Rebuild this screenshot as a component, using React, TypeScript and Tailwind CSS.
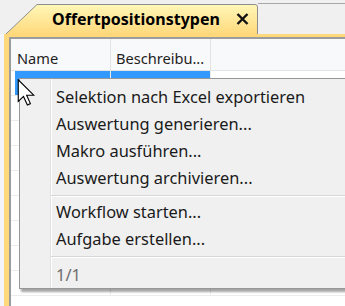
import React from 'react';

const menuItems = [
  'Selektion nach Excel exportieren',
  'Auswertung generieren...',
  'Makro ausführen...',
  'Auswertung archivieren...',
];

const menuItems2 = ['Workflow starten...', 'Aufgabe erstellen...'];

const Separator: React.FC = () => (
  <div className="h-[7px] flex flex-col justify-center pl-[31px]">
    <div className="h-px bg-[#d7d7d7]" />
    <div className="h-px bg-white" />
  </div>
);

const Cursor: React.FC = () => (
  <svg className="absolute left-[17px] top-[79px]" width="19" height="27" viewBox="0 0 12 18">
    <path
      d="M0.5 0.5 L0.5 15 L4 11.6 L6.6 17.3 L8.6 16.4 L6.1 10.8 L10.8 10.8 Z"
      fill="#fff"
      stroke="#000"
      strokeWidth="0.75"
      strokeLinejoin="miter"
    />
  </svg>
);

const App: React.FC = () => {
  const rows = Array.from({ length: 9 }, (_, i) => i);

  return (
    <div className="relative w-[345px] h-[306px] overflow-hidden bg-[#f0f0f0] font-['Noto_Sans',sans-serif] text-[#1a1a1a]">
      {/* tab strip */}
      <div className="flex h-[34px] pl-[6px]">
        <div className="relative mt-[4px] w-[252px] h-[30px] flex items-center">
          <svg className="absolute inset-0" width="252" height="30" viewBox="0 0 252 30">
            <defs>
              <linearGradient id="tabg" x1="0" y1="0" x2="0" y2="1">
                <stop offset="0" stopColor="#fff7b8" />
                <stop offset="1" stopColor="#ffd97d" />
              </linearGradient>
            </defs>
            <path d="M0 30 L31 0.5 L249 0.5 Q251.5 0.5 251.5 3 L251.5 30 Z" fill="url(#tabg)" stroke="#8e8e8e" strokeWidth="1" />
            <rect x="1" y="29" width="250" height="2" fill="#ffd87c" />
          </svg>
          <span className="relative ml-[46px] text-[16px] font-bold text-black leading-none">Offertpositionstypen</span>
          <svg className="relative ml-[16px]" width="13" height="12" viewBox="0 0 13 12">
            <path d="M1.5 1 L11.5 11 M11.5 1 L1.5 11" stroke="#111" strokeWidth="2.4" />
          </svg>
        </div>
        <div className="flex-1 mt-[3px] border-t border-[#a8a8a8]" />
      </div>

      {/* yellow frame */}
      <div className="flex h-[272px]">
        <div className="w-[4px] bg-[#f4f4fb]" />
        <div className="flex-1 bg-[#ffd87c] pt-[3px] pl-[5px]">
          <div className="h-full bg-white border-t-2 border-l-2 border-[#9c9c9c]">
            {/* header */}
            <div className="flex h-[32px] bg-[#f8f9fa] border-b border-[#e3e3e3] text-[14.6px] text-[#1e1e1e]">
              <div className="w-[100px] pl-[6px] pt-[9px] border-r border-[#e3e3e3]">Name</div>
              <div className="w-[100px] pl-[5px] pt-[9px] border-r border-[#e3e3e3]">Beschreibu...</div>
              <div className="flex-1" />
            </div>
            {/* rows */}
            {rows.map((i) => (
              <div key={i} className="flex h-[25px] border-b border-[#ececec] pl-[4px]">
                <div className={`w-[96px] border-r border-[#ececec] ${i === 0 ? 'bg-[#3399ff]' : ''}`} />
                <div className={`w-[100px] border-r border-[#ececec] ${i === 0 ? 'bg-[#3399ff]' : ''}`} />
                <div className="flex-1" />
              </div>
            ))}
          </div>
        </div>
      </div>

      {/* context menu */}
      <div className="absolute left-[19px] top-[78px] w-[340px] h-[211px] bg-[#f0f0f0] border border-[#979797] shadow-[2px_3px_2px_rgba(0,0,0,0.35)] text-[16.4px] text-[#1a1a1a]">
        <div className="absolute left-[30px] top-0 bottom-0 w-px bg-[#e2e2e2]" />
        <div className="absolute left-[31px] top-0 bottom-0 w-px bg-white" />
        <div className="relative pt-[5px]">
          {menuItems.map((t) => (
            <div key={t} className="h-[27px] flex items-center pl-[36px]">{t}</div>
          ))}
          <Separator />
          {menuItems2.map((t) => (
            <div key={t} className="h-[27px] flex items-center pl-[36px]">{t}</div>
          ))}
          <Separator />
          <div className="h-[28px] flex items-center pl-[36px] pt-[3px] text-[#6d6d6d]">1/1</div>
        </div>
      </div>

      <Cursor />
    </div>
  );
};

export default App;
